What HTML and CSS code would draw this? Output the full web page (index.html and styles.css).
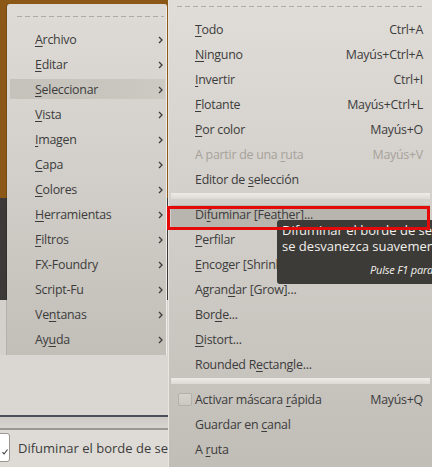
FILE: index.html
```html
<!DOCTYPE html>
<html lang="es">
<head>
<meta charset="utf-8">
<title>Seleccionar</title>
<link rel="stylesheet" href="styles.css">
</head>
<body>
<div class="screen">
  <div class="backdrop">
    <div class="canvas"></div>
    <div class="status-gap"></div>
    <div class="rule-dark"></div>
    <div class="rule-band"></div>
    <div class="rule-light"></div>
    <div class="option-row">
      <span class="opt-check"><svg width="6" height="6" viewBox="0 0 6 6"><path d="M0.5 3.2l1.6 1.8 3.4-4.5" fill="none" stroke="#3c3c3c" stroke-width="1.1"/></svg></span>
      <span class="opt-label">Difuminar el borde de selección</span>
    </div>
  </div>

  <div class="menu menu-main">
    <div class="tearoff tearoff-main"></div>
    <div class="item"><span class="label"><u>A</u>rchivo</span><svg class="chev" width="5" height="8" viewBox="0 0 5 8"><path d="M1 1l3 3-3 3" fill="none" stroke="#3c3c3c" stroke-width="1.3"/></svg></div>
    <div class="item"><span class="label"><u>E</u>ditar</span><svg class="chev" width="5" height="8" viewBox="0 0 5 8"><path d="M1 1l3 3-3 3" fill="none" stroke="#3c3c3c" stroke-width="1.3"/></svg></div>
    <div class="item item-open"><span class="label"><u>S</u>eleccionar</span><svg class="chev" width="5" height="8" viewBox="0 0 5 8"><path d="M1 1l3 3-3 3" fill="none" stroke="#3c3c3c" stroke-width="1.3"/></svg></div>
    <div class="item"><span class="label"><u>V</u>ista</span><svg class="chev" width="5" height="8" viewBox="0 0 5 8"><path d="M1 1l3 3-3 3" fill="none" stroke="#3c3c3c" stroke-width="1.3"/></svg></div>
    <div class="item"><span class="label"><u>I</u>magen</span><svg class="chev" width="5" height="8" viewBox="0 0 5 8"><path d="M1 1l3 3-3 3" fill="none" stroke="#3c3c3c" stroke-width="1.3"/></svg></div>
    <div class="item"><span class="label"><u>C</u>apa</span><svg class="chev" width="5" height="8" viewBox="0 0 5 8"><path d="M1 1l3 3-3 3" fill="none" stroke="#3c3c3c" stroke-width="1.3"/></svg></div>
    <div class="item"><span class="label"><u>C</u>olores</span><svg class="chev" width="5" height="8" viewBox="0 0 5 8"><path d="M1 1l3 3-3 3" fill="none" stroke="#3c3c3c" stroke-width="1.3"/></svg></div>
    <div class="item"><span class="label"><u>H</u>erramientas</span><svg class="chev" width="5" height="8" viewBox="0 0 5 8"><path d="M1 1l3 3-3 3" fill="none" stroke="#3c3c3c" stroke-width="1.3"/></svg></div>
    <div class="item"><span class="label"><u>F</u>iltros</span><svg class="chev" width="5" height="8" viewBox="0 0 5 8"><path d="M1 1l3 3-3 3" fill="none" stroke="#3c3c3c" stroke-width="1.3"/></svg></div>
    <div class="item"><span class="label">FX-Foundry</span><svg class="chev" width="5" height="8" viewBox="0 0 5 8"><path d="M1 1l3 3-3 3" fill="none" stroke="#3c3c3c" stroke-width="1.3"/></svg></div>
    <div class="item"><span class="label">Script-Fu</span><svg class="chev" width="5" height="8" viewBox="0 0 5 8"><path d="M1 1l3 3-3 3" fill="none" stroke="#3c3c3c" stroke-width="1.3"/></svg></div>
    <div class="item"><span class="label">Ve<u>n</u>tanas</span><svg class="chev" width="5" height="8" viewBox="0 0 5 8"><path d="M1 1l3 3-3 3" fill="none" stroke="#3c3c3c" stroke-width="1.3"/></svg></div>
    <div class="item"><span class="label">Ay<u>u</u>da</span><svg class="chev" width="5" height="8" viewBox="0 0 5 8"><path d="M1 1l3 3-3 3" fill="none" stroke="#3c3c3c" stroke-width="1.3"/></svg></div>
  </div>

  <div class="menu menu-select">
    <div class="tearoff tearoff-select"></div>
    <div class="item"><span class="label"><u>T</u>odo</span><span class="shortcut">Ctrl+A</span></div>
    <div class="item"><span class="label"><u>N</u>inguno</span><span class="shortcut">Mayús+Ctrl+A</span></div>
    <div class="item"><span class="label"><u>I</u>nvertir</span><span class="shortcut">Ctrl+I</span></div>
    <div class="item"><span class="label"><u>F</u>lotante</span><span class="shortcut">Mayús+Ctrl+L</span></div>
    <div class="item"><span class="label"><u>P</u>or color</span><span class="shortcut">Mayús+O</span></div>
    <div class="item disabled"><span class="label">A partir de una <u>r</u>uta</span><span class="shortcut">Mayús+V</span></div>
    <div class="item"><span class="label">Editor de <u>s</u>elección</span></div>
    <div class="sep"></div>
    <div class="item item-hover"><span class="label">Di<u>f</u>uminar [Feather]...</span></div>
    <div class="item"><span class="label"><u>P</u>erfilar</span></div>
    <div class="item"><span class="label"><u>E</u>ncoger [Shrink]...</span></div>
    <div class="item"><span class="label">Agran<u>d</u>ar [Grow]...</span></div>
    <div class="item"><span class="label">Bor<u>d</u>e...</span></div>
    <div class="item"><span class="label"><u>D</u>istort...</span></div>
    <div class="item"><span class="label">Rounded R<u>e</u>ctangle...</span></div>
    <div class="sep"></div>
    <div class="item item-check"><span class="checkbox"></span><span class="label">Activar máscara <u>r</u>ápida</span><span class="shortcut">Mayús+Q</span></div>
    <div class="item"><span class="label">Guardar en <u>c</u>anal</span></div>
    <div class="item"><span class="label">A <u>r</u>uta</span></div>
  </div>

  <div class="tooltip">
    <div class="tip-line">Difuminar el borde de selección para que</div>
    <div class="tip-line">se desvanezca suavemente</div>
    <div class="tip-help">Pulse F1 para obtener más ayuda</div>
  </div>

  <div class="focus-ring"></div>
</div>
</body>
</html>
```

FILE: styles.css
```css
html, body {
  margin: 0;
  padding: 0;
}

body {
  width: 432px;
  height: 467px;
  overflow: hidden;
  font-family: "Open Sans", "Noto Sans", "DejaVu Sans", sans-serif;
  font-size: 12.4px;
  letter-spacing: -0.25px;
  color: #3c3c3c;
}

.screen {
  position: relative;
  width: 432px;
  height: 467px;
  overflow: hidden;
  background: #dad7d2;
}

/* ---------- background window ---------- */
.backdrop {
  display: flex;
  flex-direction: column;
  width: 168px;
}

.canvas {
  height: 355px;
  background: linear-gradient(to bottom,
    #8b5818 0, #8b5818 198px,
    #3b3a38 198px, #3b3a38 300px,
    #d4d1cc 300px, #d4d1cc 355px);
}

.status-gap {
  height: 60px;
  background: #dad7d2;
}

.rule-dark {
  height: 2px;
  background: #4b4f5c;
}

.rule-band {
  height: 11px;
  background: linear-gradient(to bottom, #cdcac5, #d8d5d0);
}

.rule-light {
  height: 2px;
  background: #9a9792;
}

.option-row {
  height: 35px;
  padding-bottom: 3px;
  display: flex;
  align-items: center;
  background: #dedbd6;
  white-space: nowrap;
  overflow: hidden;
}

.opt-check {
  width: 11px;
  height: 21px;
  margin-left: -4px;
  margin-right: 8px;
  border: 1px solid #9b9893;
  border-radius: 3px;
  background: #ffffff;
  display: flex;
  align-items: flex-end;
  justify-content: flex-end;
  padding: 0 1px 6px 0;
  box-sizing: content-box;
  flex: none;
}

.opt-label {
  font-size: 13px;
  letter-spacing: 0;
}

/* ---------- menus ---------- */
.menu {
  position: absolute;
  display: flex;
  flex-direction: column;
  box-sizing: border-box;
  white-space: nowrap;
}

.menu-main {
  left: 7px;
  top: 4px;
  width: 160px;
  height: 351px;
  border-radius: 3px 3px 0 0;
  border-right: 1px solid #efede9;
  background: linear-gradient(to bottom, #dedbd6 0%, #d3d0cb 45%, #c2beb8 100%);
  box-shadow: -1px 0 0 rgba(0, 0, 0, 0.15);
}

.menu-select {
  left: 168px;
  top: 0;
  width: 264px;
  height: 467px;
  border-left: 1px solid #e8e6e2;
  background: linear-gradient(to bottom, #e0ddd8 0%, #d2cec9 45%, #c1bdb7 100%);
}

.tearoff {
  height: 1px;
  background: repeating-linear-gradient(to right, #aeaaa4 0 5px, transparent 5px 8px);
}

.tearoff-main {
  margin: 12px 2px 10px 10px;
}

.tearoff-select {
  margin: 6px 7px 10px 8px;
}

.item {
  position: relative;
  height: 25px;
  flex: none;
  display: flex;
  align-items: center;
  box-sizing: border-box;
}

.item > * {
  position: relative;
}

.menu-main .item {
  padding: 0 3px 0 28px;
}

.menu-select .item {
  padding: 0 9px 0 26px;
}

.label {
  flex: 1;
}

.label u {
  text-decoration-thickness: 1px;
  text-underline-offset: 2px;
}

.chev {
  flex: none;
}

.shortcut {
  flex: none;
}

.disabled {
  color: #a6a29c;
}

.item-open::before {
  content: "";
  position: absolute;
  left: 3px;
  right: 1px;
  top: 2px;
  bottom: 3px;
  background: linear-gradient(to right, #c5c2bc, #c9c6c0 70%, #cdcac4);
}

.item-hover::before {
  content: "";
  position: absolute;
  left: 2px;
  right: 2px;
  top: 3px;
  bottom: 0;
  background: #b8b4ae;
}

.sep {
  height: 6px;
  margin: 1px 2px 3px;
  flex: none;
  background: linear-gradient(to bottom, #ecebe7, #dddad5);
}

.menu-select .item-check {
  padding-left: 9px;
}

.checkbox {
  width: 14px;
  height: 13px;
  margin-right: 3px;
  flex: none;
  border: 1px solid #b3afa9;
  border-radius: 2px;
  box-sizing: border-box;
  background: linear-gradient(to bottom, #d6d3ce, #cbc8c2);
}

/* ---------- tooltip ---------- */
.tooltip {
  position: absolute;
  left: 277px;
  top: 220px;
  width: 270px;
  height: 64px;
  box-sizing: border-box;
  padding: 2px 0 0 5px;
  border-radius: 3px;
  background: #3c3b37;
  color: #f2f0ec;
  white-space: nowrap;
  font-size: 13px;
  letter-spacing: 0;
}

.tip-line {
  line-height: 16px;
}

.tip-help {
  margin-top: 8px;
  padding-left: 88px;
  line-height: 16px;
  font-size: 11px;
  letter-spacing: -0.2px;
  font-style: italic;
}

/* ---------- annotation ---------- */
.focus-ring {
  position: absolute;
  left: 167px;
  top: 206px;
  width: 263px;
  height: 24px;
  box-sizing: border-box;
  border: 3px solid #e50a0a;
}
```
